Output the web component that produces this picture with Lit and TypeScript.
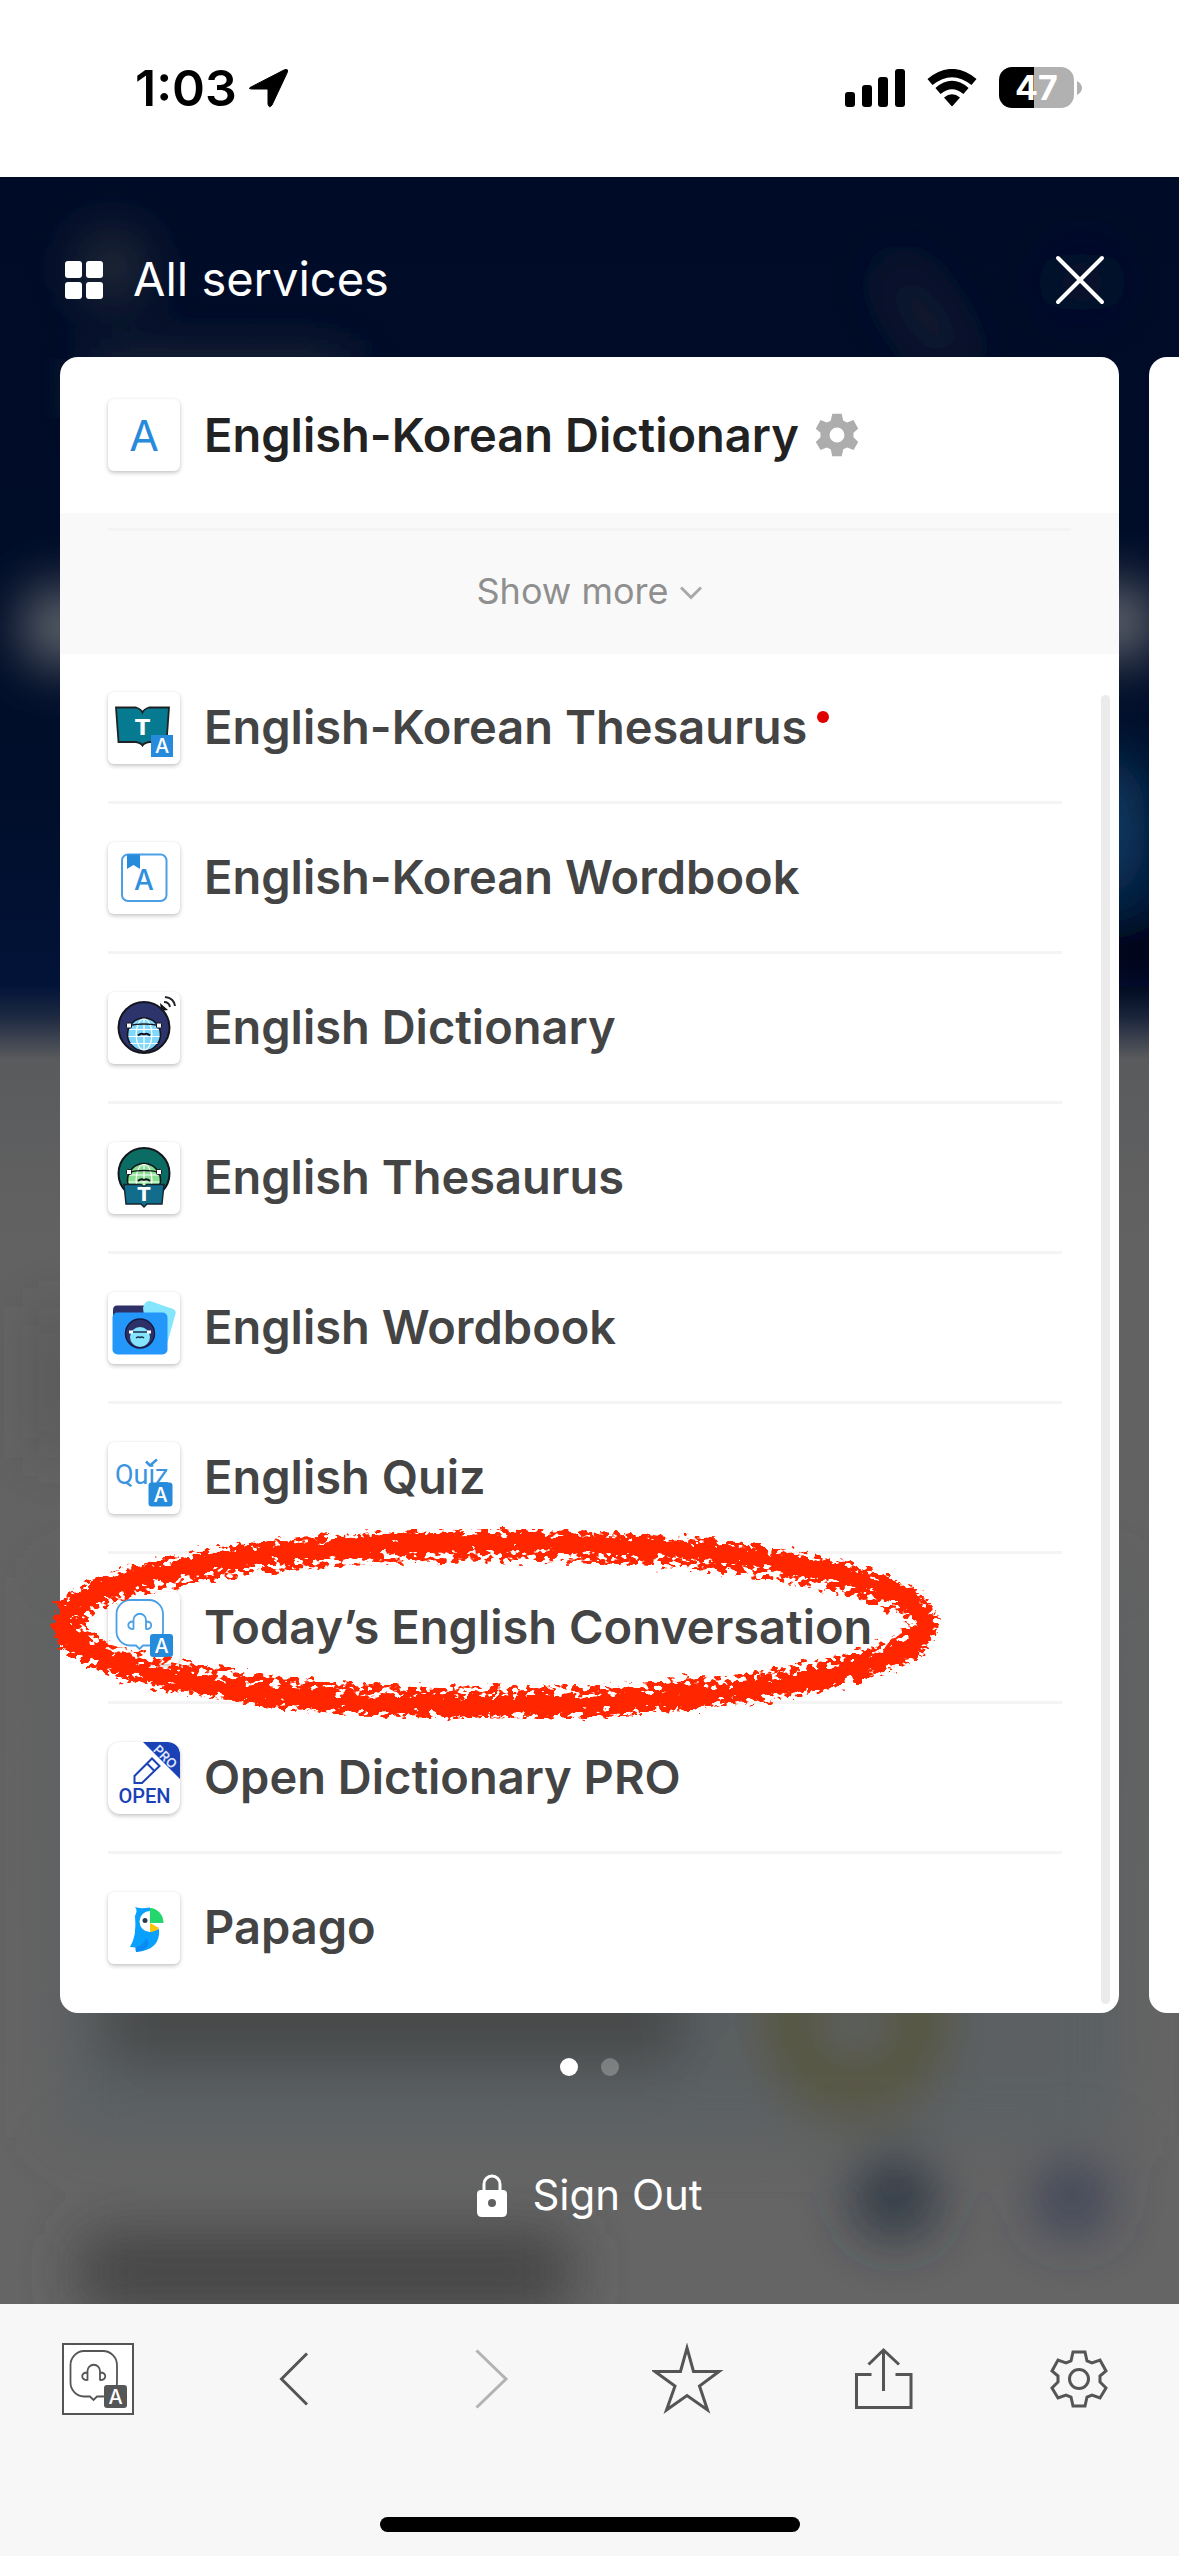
import { LitElement, html, svg, css, nothing, TemplateResult } from "lit";
import { customElement, property } from "lit/decorators.js";

const GEAR =
  "M28 9H40L42 18L47 20L55 17L61 28L55 33V39L61 45L55 55L47 52L42 54L40 63H28L26 54L21 52L13 55L7 45L13 39V33L7 28L13 17L21 20L26 18Z";

const badge = (x: number, size: number, color: string, radius: number) => svg`
  <rect x=${x} y=${x} width=${size} height=${size} rx=${radius} fill=${color} />
  <text x=${x + size / 2} y=${x + size / 2 + 7} text-anchor="middle" font-size="20" font-weight="500" fill="#fff">A</text>`;

const conversation = (color: string, badgeColor: string) => svg`
  <g fill="none" stroke=${color} stroke-width="1.8">
    <path d="M22 8H41A14 14 0 0 1 55 22V39A14 14 0 0 1 41 53.500H35L31.500 57L28 53.500H22A14 14 0 0 1 8.500 39V22A14 14 0 0 1 22 8Z" />
    <path d="M25.500 37.500V28A6.200 6.200 0 0 1 38 28V37.500M25.500 29.500C18.500 29 18.500 37.500 25.500 37.200M38 29.500C45 29 45 37.500 38 37.200" />
  </g>
  ${badge(42, 23, badgeColor, 3)}`;

const globe = (cx: number, cy: number, r: number, fill: string) => svg`
  <circle cx=${cx} cy=${cy} r=${r} fill=${fill} stroke="#15161d" stroke-width="1.6" />
  <g fill="none" stroke="#fff" stroke-width="1.2">
    <ellipse cx=${cx} cy=${cy} rx=${r * 0.48} ry=${r - 1} />
    <path d="M${cx} ${cy - r + 1}V${cy + r - 1}M${cx - r + 2} ${cy - 5}H${cx + r - 2}M${cx - r + 1} ${cy + 2}H${cx + r - 1}M${cx - r + 3} ${cy + 9}H${cx + r - 3}" />
  </g>
  <path d="M${cx - 6} ${cy + 1}Q${cx - 3} ${cy - 2} ${cx} ${cy}Q${cx + 3} ${cy - 2} ${cx + 6} ${cy + 1}" fill="none" stroke="#15161d" stroke-width="1.8" />`;

const glasses = (y: number) => svg`
  <path d="M21 ${y}Q36 ${y - 3} 51 ${y}" fill="none" stroke="#15161d" stroke-width="1.6" />
  <rect x="18.500" y=${y - 2.5} width="5" height="5" rx="1" fill="#fff" stroke="#15161d" />
  <rect x="48.500" y=${y - 2.5} width="5" height="5" rx="1" fill="#fff" stroke="#15161d" />`;

const tileArt: Record<string, TemplateResult> = {
  dictionary: svg`<text x="36" y="52" text-anchor="middle" font-size="43" fill="#278bdc">A</text>`,
  thesaurus: svg`
    <path d="M8 15.500H28Q33 17 34.500 20.500Q36 17 41 15.500H61L58.500 50H41Q36 51 34.500 53.500Q33 51 28 50H10.500Z" fill="#067a90" stroke="#1c2224" stroke-width="1.8" />
    <text x="34.500" y="43" text-anchor="middle" font-size="22" font-weight="700" font-family="DejaVu Sans, sans-serif" fill="#fff">T</text>
    ${badge(43, 22, "#278bdc", 0)}`,
  wordbook: svg`
    <rect x="14" y="12.500" width="44.500" height="46.500" rx="6" fill="none" stroke="#4ba0e5" stroke-width="2" />
    <path d="M19 12.500H32V27L25.500 23L19 27Z" fill="#278bdc" />
    <text x="36" y="48" text-anchor="middle" font-size="28" font-weight="500" fill="#2f90de">A</text>`,
  english: svg`
    <circle cx="36" cy="35.500" r="25.500" fill="#2d346c" stroke="#15161d" stroke-width="2" />
    ${globe(36, 42.5, 16.5, "#80d8fb")}${glasses(33.5)}
    <path d="M52 11L60 18L53 19Z" fill="#15161d" />
    <path d="M56 10Q61 10 62 15M57 5Q66 6 67 14" fill="none" stroke="#24242c" stroke-width="2" />`,
  englishThesaurus: svg`
    <circle cx="36" cy="31.500" r="25.500" fill="#0a6c62" stroke="#15161d" stroke-width="2" />
    ${globe(36, 38, 16.5, "#88df92")}${glasses(30)}
    <path d="M16 42.500H33L36 44.500L39 42.500H56L54 62H39L36 65L33 62H18Z" fill="#126c8c" stroke="#15242c" stroke-width="1.400" />
    <text x="36" y="59" text-anchor="middle" font-size="19" font-weight="700" font-family="DejaVu Sans, sans-serif" fill="#fff">T</text>`,
  englishWordbook: svg`
    <path d="M5 24V18Q5 13.500 9 13.500H50V24Z" fill="#2d3168" />
    <path d="M42 9L65 17Q68.500 18.500 67.500 22L59 52H40L35 16Q37 8 42 9Z" fill="#84e5fd" />
    <rect x="4.500" y="20.500" width="55" height="42" rx="5" fill="#2497fb" />
    <circle cx="32" cy="41.500" r="14.500" fill="#2d3168" stroke="#171b42" stroke-width="1.500" />
    <circle cx="32" cy="45" r="10" fill="#84e5fd" />
    <path d="M22 40H42M28 46Q30 44.500 32 45.500Q34 44.500 36 46" fill="none" stroke="#1c2c4c" stroke-width="1.500" />
    <path d="M21 40H25M39 40H43" stroke="#fff" stroke-width="3" />`,
  quiz: svg`
    <text x="7" y="42" font-size="27" font-family="Roboto, sans-serif" fill="#3a94df">Quiz</text>
    <path d="M38 19.500L42 23.500L49 17.500" fill="none" stroke="#3a94df" stroke-width="2.500" />
    ${badge(40.5, 24, "#278bdc", 3)}`,
  today: conversation("#4ba0e5", "#278bdc"),
  open: svg`
    <path d="M35 0H60A12 12 0 0 1 72 12V37Z" fill="#1a41b5" />
    <text transform="translate(54 18) rotate(45)" text-anchor="middle" font-size="13" font-weight="600" fill="#dfe6ff">PRO</text>
    <path d="M26.500 41V34L44 16.500L51.500 24L34 41ZM39 21.500L46.500 29" fill="none" stroke="#1a41b5" stroke-width="2" />
    <text x="36.500" y="61" text-anchor="middle" font-size="20" font-weight="500" font-family="Roboto, sans-serif" fill="#1a41b5">OPEN</text>`,
  papago: svg`
    <path d="M27 15Q31 17 42 15.500V40L51 37Q53 58 28 60L27.500 55.500L22 55Q29 44 27 24Q30 18 27 15Z" fill="#0aa1fd" />
    <path d="M28 60L27.500 55.500Q36 53 38 46Q44 52 36 58Z" fill="#0a8af5" />
    <path d="M42 19A10.500 10.500 0 0 0 42 40Z" fill="#fff" />
    <circle cx="37" cy="28.500" r="2.500" fill="#2d3a4a" />
    <path d="M42 16A14 15 0 0 1 55.500 31H42Z" fill="#23d76c" />
    <path d="M42 31L51 36Q48 39.500 42 40Z" fill="#ffc405" />`,
};

@customElement("service-tile")
class ServiceTile extends LitElement {
  @property() name = "dictionary";
  static styles = css`
    :host { display: block; flex: none; }
    svg {
      display: block;
      width: 72px;
      height: 72px;
      border-radius: 6px;
      background: #fff;
      box-shadow: 0 2px 4px rgba(0, 0, 0, 0.22), 0 0 2px rgba(0, 0, 0, 0.06);
      font-family: Inter, sans-serif;
    }
    .rounded { border-radius: 12px; }
  `;
  render() {
    return html`<svg class=${this.name === "open" ? "rounded" : ""} viewBox="0 0 72 72" aria-hidden="true">${tileArt[this.name]}</svg>`;
  }
}

@customElement("crayon-ring")
class CrayonRing extends LitElement {
  static styles = css`
    :host { display: block; pointer-events: none; }
    svg { display: block; width: 100%; height: 100%; overflow: visible; }
  `;
  render() {
    return html`<svg viewBox="0 0 900 200" aria-hidden="true">
      <defs>
        <filter id="crayon" x="-2%" y="-10%" width="104%" height="120%">
          <feTurbulence type="fractalNoise" baseFrequency="0.09 0.13" numOctaves="3" seed="4" result="n" />
          <feDisplacementMap in="SourceGraphic" in2="n" scale="22" xChannelSelector="R" yChannelSelector="G" />
        </filter>
        <filter id="speckle" x="-2%" y="-10%" width="104%" height="120%">
          <feTurbulence type="fractalNoise" baseFrequency="0.11 0.17" numOctaves="2" seed="9" result="n" />
          <feColorMatrix in="n" type="matrix" values="0 0 0 0 0  0 0 0 0 0  0 0 0 0 0  22 0 0 0 -10" result="m" />
          <feDisplacementMap in="SourceGraphic" in2="n" scale="18" xChannelSelector="G" yChannelSelector="B" result="d" />
          <feComposite in="d" in2="m" operator="in" />
        </filter>
      </defs>
      <ellipse cx="450" cy="100" rx="431" ry="82" fill="none" stroke="#ff2700" stroke-width="18" filter="url(#crayon)" />
      <ellipse cx="450" cy="100" rx="428" ry="79" fill="none" stroke="#ff2700" stroke-width="31" filter="url(#speckle)" />
    </svg>`;
  }
}

interface Service {
  label: string;
  icon: string;
  isNew?: boolean;
  circled?: boolean;
}

const services: Service[] = [
  { label: "English-Korean Thesaurus", icon: "thesaurus", isNew: true },
  { label: "English-Korean Wordbook", icon: "wordbook" },
  { label: "English Dictionary", icon: "english" },
  { label: "English Thesaurus", icon: "englishThesaurus" },
  { label: "English Wordbook", icon: "englishWordbook" },
  { label: "English Quiz", icon: "quiz" },
  { label: "Today’s English Conversation", icon: "today", circled: true },
  { label: "Open Dictionary PRO", icon: "open" },
  { label: "Papago", icon: "papago" },
];

const line = (d: string) => svg`<path d=${d} fill="none" stroke="currentColor" stroke-width="3" />`;

const tools = [
  { label: "Home", art: svg`<rect x="1" y="1" width="70" height="70" fill="#fff" stroke="#555" stroke-width="2" />${conversation("#555", "#555658")}` },
  { label: "Back", art: line("M48 10.500L22.500 36L48 61.500") },
  { label: "Forward", art: line("M21.500 7.500L51 36L21.500 64.500"), disabled: true },
  { label: "Bookmark", art: line("M35 5L41.500 28.500H67L47.500 43L55.500 67L35 52.500L14.500 67L23 43L3 28.500H28.500Z") },
  { label: "Share", art: line("M23.500 31.500H8.500V64.500H63V31.500H47.500M35.500 48V7M20.500 21.500L35.500 7L51 21.500") },
  { label: "Settings", art: svg`${line(GEAR)}<circle cx="34" cy="36" r="9.500" fill="none" stroke="currentColor" stroke-width="3" />` },
];

@customElement("app-root")
class AppRoot extends LitElement {
  static styles = css`
    :host {
      display: flex;
      flex-direction: column;
      min-height: 100vh;
      overflow: hidden;
      background: #fff;
      font-family: Inter, "Liberation Sans", sans-serif;
    }
    svg { display: block; flex: none; }
    button {
      margin: 0;
      padding: 0;
      border: 0;
      background: none;
      color: inherit;
      font: inherit;
    }
    a { color: inherit; text-decoration: none; }

    .status {
      display: flex;
      align-items: center;
      justify-content: space-between;
      box-sizing: border-box;
      height: 177px;
      padding: 0 97px 2px 135px;
      color: #000;
    }
    .clock { display: flex; align-items: center; gap: 12px; font-size: 50px; line-height: 60px; font-weight: 600; }
    .signals { display: flex; align-items: center; gap: 22px; }
    .battery { display: flex; align-items: center; gap: 3px; }
    .cell {
      width: 75px;
      border-radius: 13px;
      background: linear-gradient(90deg, #000 47%, #b1b1b1 47%);
      color: #fff;
      font-size: 34px;
      line-height: 41px;
      font-weight: 700;
      text-align: center;
    }

    .overlay { position: relative; flex: 1; display: flex; flex-direction: column; color: #fff; }
    .backdrop { position: absolute; inset: 0; width: 100%; height: 100%; }
    .content { position: relative; display: flex; flex-direction: column; }
    .head {
      display: flex;
      align-items: center;
      justify-content: space-between;
      box-sizing: border-box;
      height: 180px;
      padding: 26px 72px 0 65px;
    }
    .title { display: flex; align-items: center; gap: 30px; margin: 0; font-size: 47px; line-height: 60px; font-weight: 400; }
    .title-text, .sign-text { padding-bottom: 2px; }
    .more-text { padding-bottom: 4px; }

    .carousel { display: flex; gap: 30px; padding-left: 60px; }
    .card {
      position: relative;
      flex: 0 0 calc(100% - 60px);
      border-radius: 18px;
      background: #fff;
      color: #222;
    }
    .card-head { display: flex; align-items: center; height: 156px; padding-left: 48px; font-size: 47px; }
    .name { margin: 0 16px 0 24px; font-size: inherit; line-height: 60px; font-weight: 600; }
    .more { padding-top: 15px; background: #f9f9f9; color: #8f8f8f; }
    .more-line { margin: 0 48px; height: 3px; background: #f4f4f4; }
    .more-button {
      display: flex;
      align-items: center;
      justify-content: center;
      gap: 12px;
      width: 100%;
      height: 123px;
      font-size: 36px;
    }
    .list { display: flex; flex-direction: column; margin: 0; padding: 0 57px 9px 48px; list-style: none; color: #444; font-size: 47px; }
    .row { position: relative; box-sizing: border-box; height: 150px; border-bottom: 3px solid #f4f4f4; }
    .row:last-child { border-color: transparent; }
    .link { display: flex; align-items: center; height: 100%; }
    .link .name { padding-bottom: 2px; }
    .dot { width: 12px; height: 12px; margin: 0 0 22px -6px; border-radius: 50%; background: #e00000; }
    .ring { position: absolute; left: -63px; top: -30px; width: 900px; height: 200px; z-index: 1; }
    .track { position: absolute; right: 9px; top: 338px; bottom: 9px; width: 9px; border-radius: 5px; background: #ebebeb; }

    .pages { display: flex; justify-content: center; gap: 23px; margin-top: 45px; }
    .page { width: 18px; height: 18px; border-radius: 50%; background: rgba(255, 255, 255, 0.25); }
    .current { background: #fff; }
    .sign { display: flex; align-items: center; gap: 24px; align-self: center; margin: 89px 0 77px; font-size: 42px; line-height: 60px; }

    .toolbar { background: #f7f7f7; color: #555; }
    .tools { display: flex; justify-content: space-between; padding: 39px 62px 0; }
    .tool:disabled { color: #b3b3b3; }
    .indicator { width: 420px; height: 15px; margin: 102px auto 24px; border-radius: 8px; background: #000; }
  `;

  private backdrop() {
    return html`<svg class="backdrop" viewBox="0 0 1179 2127" preserveAspectRatio="none" aria-hidden="true">
      <defs>
        <linearGradient id="base" x1="0" y1="0" x2="0" y2="1">
          <stop offset="0" stop-color="#000b27" />
          <stop offset="0.22" stop-color="#000d28" />
          <stop offset="0.3" stop-color="#010f2c" />
          <stop offset="0.38" stop-color="#021338" />
          <stop offset="0.395" stop-color="#1e2a42" />
          <stop offset="0.415" stop-color="#5a5b5d" />
          <stop offset="0.5" stop-color="#626262" />
          <stop offset="1" stop-color="#656565" />
        </linearGradient>
        <filter id="soft" filterUnits="userSpaceOnUse" x="-120" y="-120" width="1420" height="2370"><feGaussianBlur stdDeviation="28" /></filter>
      </defs>
      <rect width="1179" height="2127" fill="url(#base)" />
      <g filter="url(#soft)">
        <circle cx="112" cy="90" r="32" fill="#33373f" />
        <path d="M890 90L960 190" stroke="#1c2334" stroke-width="36" />
        <circle cx="1082" cy="105" r="30" fill="#091530" />
        <rect x="90" y="182" width="260" height="60" fill="#262d3c" />
        <circle cx="62" cy="450" r="38" fill="#77797c" />
        <circle cx="1117" cy="445" r="38" fill="#77797c" />
        <ellipse cx="1108" cy="650" rx="38" ry="74" fill="#0a4168" />
        <rect x="1095" y="740" width="84" height="70" fill="#00030d" />
        <rect x="50" y="1130" width="14" height="150" fill="#444" />
        <rect x="60" y="1400" width="1060" height="560" fill="#5b6163" />
        <rect x="100" y="1800" width="590" height="90" rx="30" fill="#464848" />
        <circle cx="855" cy="1845" r="68" fill="none" stroke="#56532f" stroke-width="46" />
        <circle cx="895" cy="2020" r="40" fill="#28303f" />
        <circle cx="1072" cy="2022" r="34" fill="#353a54" />
        <rect x="80" y="2055" width="490" height="80" rx="20" fill="#454545" />
      </g>
    </svg>`;
  }

  render() {
    return html`
      <header class="status">
        <div class="clock">
          <span>1:03</span>
          <svg width="40" height="40" viewBox="0 0 40 40" aria-hidden="true"><path d="M2 19L35 2Q40 0 38 5L23 37Q20 41 19 36V22Q19 21 18 21H4Q-2 21 2 19Z" stroke="#000" stroke-width="1" /></svg>
        </div>
        <div class="signals">
          <svg width="60" height="38" viewBox="0 0 60 38" aria-hidden="true">
            <rect y="23" width="10" height="15" rx="3" /><rect x="17" y="16" width="10" height="22" rx="3" />
            <rect x="33" y="8" width="10" height="30" rx="3" /><rect x="50" width="10" height="38" rx="3" />
          </svg>
          <svg width="50" height="38" viewBox="0 0 50 38" aria-hidden="true">
            <g fill="none" stroke="#000" stroke-width="8"><path d="M3 13Q25 -5 47 13" /><path d="M11 22Q25 10 39 22" /></g>
            <path d="M17 28.500Q25 22 33 28.500L26 36.500Q25 38 24 36.500Z" />
          </svg>
          <div class="battery">
            <div class="cell">47</div>
            <svg width="5" height="14" viewBox="0 0 5 14" aria-hidden="true"><path d="M0 0Q5 3 5 7T0 14Z" fill="#b1b1b1" /></svg>
          </div>
        </div>
      </header>

      <main class="overlay">
        ${this.backdrop()}
        <div class="content">
          <div class="head">
            <h1 class="title">
              <svg width="38" height="38" viewBox="0 0 38 38" fill="#fff" aria-hidden="true">
                <rect width="17" height="17" rx="3" /><rect x="21" width="17" height="17" rx="3" />
                <rect y="21" width="17" height="17" rx="3" /><rect x="21" y="21" width="17" height="17" rx="3" />
              </svg>
              <span class="title-text">All services</span>
            </h1>
            <button aria-label="Close">
              <svg width="54" height="54" viewBox="0 0 54 54"><path d="M5 5L49 49M49 5L5 49" stroke="#fff" stroke-width="4" stroke-linecap="round" /></svg>
            </button>
          </div>

          <div class="carousel">
            <section class="card">
              <div class="card-head">
                <service-tile name="dictionary"></service-tile>
                <h2 class="name">English-Korean Dictionary</h2>
                <button aria-label="Dictionary settings">
                  <svg width="44" height="44" viewBox="6 8 56 56"><path fill="#adadad" fill-rule="evenodd" d="${GEAR}M34 26.500A9.500 9.500 0 0 0 34 45.500A9.500 9.500 0 0 0 34 26.500Z" /></svg>
                </button>
              </div>
              <div class="more">
                <div class="more-line"></div>
                <button class="more-button">
                  <span class="more-text">Show more</span>
                  <svg width="22" height="14" viewBox="0 0 22 14" aria-hidden="true"><path d="M1 1.500L11 11.500L21 1.500" fill="none" stroke="#a8a8a8" stroke-width="3" /></svg>
                </button>
              </div>
              <ul class="list">
                ${services.map(
                  (s) => html`<li class="row">
                    <a class="link" href="#">
                      <service-tile name=${s.icon}></service-tile>
                      <span class="name">${s.label}</span>
                      ${s.isNew ? html`<span class="dot"></span>` : nothing}
                    </a>
                    ${s.circled ? html`<crayon-ring class="ring"></crayon-ring>` : nothing}
                  </li>`
                )}
              </ul>
              <div class="track"></div>
            </section>
            <section class="card"></section>
          </div>

          <div class="pages"><span class="page current"></span><span class="page"></span></div>
          <button class="sign">
            <svg width="32" height="44" viewBox="0 0 32 44" aria-hidden="true">
              <path d="M8 18V10A8 8 0 0 1 24 10V18" fill="none" stroke="#fff" stroke-width="3" />
              <path fill="#fff" fill-rule="evenodd" d="M5 16H27Q31 16 31 20V38Q31 43 26 43H6Q1 43 1 38V20Q1 16 5 16ZM16 25A4 4 0 0 0 16 33A4 4 0 0 0 16 25Z" />
            </svg>
            <span class="sign-text">Sign Out</span>
          </button>
        </div>
      </main>

      <footer class="toolbar">
        <nav class="tools">
          ${tools.map(
            (t) => html`<button class="tool" aria-label=${t.label} ?disabled=${t.disabled}>
              <svg width="72" height="72" viewBox="0 0 72 72" aria-hidden="true">${t.art}</svg>
            </button>`
          )}
        </nav>
        <div class="indicator"></div>
      </footer>
    `;
  }
}
